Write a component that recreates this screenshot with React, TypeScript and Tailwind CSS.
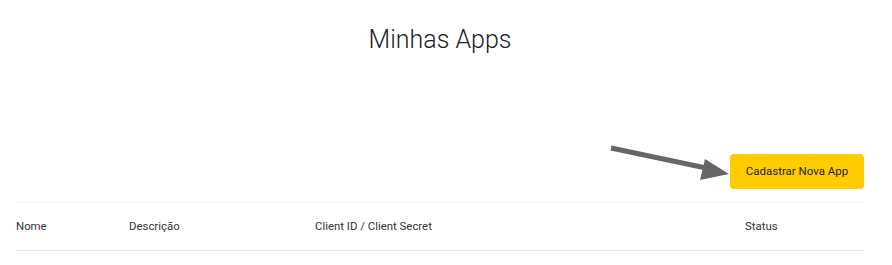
const columns = [
  { label: "Nome", width: "w-[113px]" },
  { label: "Descrição", width: "w-[186px]" },
  { label: "Client ID / Client Secret", width: "w-[430px]" },
  { label: "Status", width: "flex-1" },
];

export default function App() {
  return (
    <div className="relative w-[892px] h-[265px] bg-white font-['Roboto',sans-serif] overflow-hidden">
      {/* Title */}
      <h1 className="pt-[21px] pr-[12px] text-center text-[25px] leading-[38px] font-light text-[#222]">
        Minhas Apps
      </h1>

      {/* Actions */}
      <div className="mt-[95px] flex justify-end pr-[28px]">
        <button className="h-[35px] w-[134px] rounded-[4px] bg-[#ffcc00] text-[11.5px] text-[#222] font-normal">
          Cadastrar Nova App
        </button>
      </div>

      {/* Table header */}
      <div className="mt-[13px] ml-[16px] w-[848px] border-t border-b border-t-[#f1f1f3] border-b-[#e3e4e8] flex items-center h-[49px] text-[11.4px] text-[#333]">
        {columns.map((c) => (
          <div key={c.label} className={c.width}>
            {c.label}
          </div>
        ))}
      </div>

      {/* Annotation arrow */}
      <svg className="absolute left-0 top-0 pointer-events-none" width="892" height="265">
        <line x1="611" y1="148" x2="706" y2="168" stroke="#666" strokeWidth="5" />
        <polygon points="729,174 705,159 700,180" fill="#666" />
      </svg>
    </div>
  );
}
